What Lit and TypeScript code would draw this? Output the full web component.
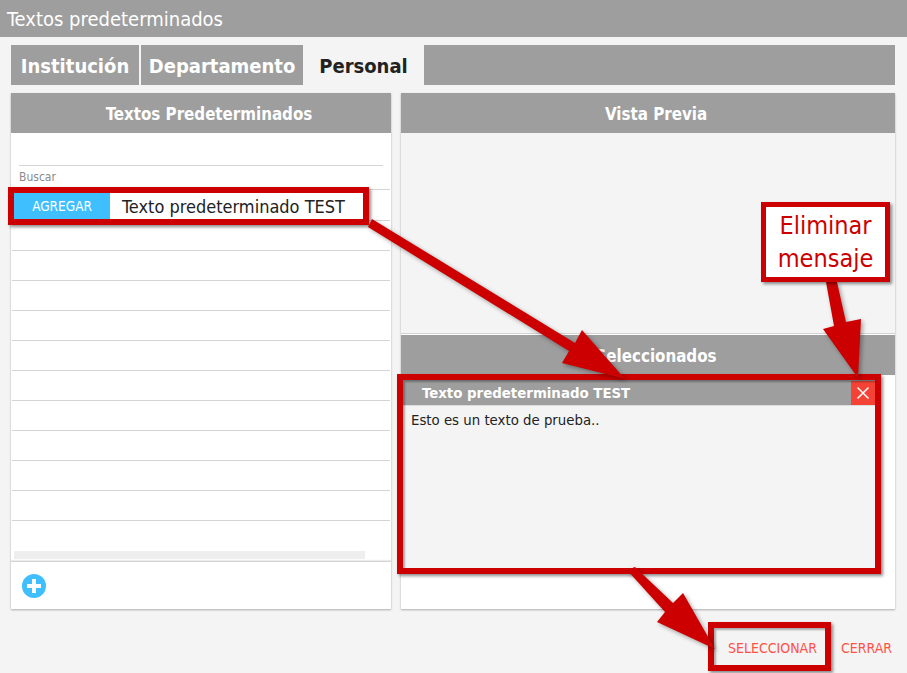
import { LitElement, html, css, svg } from "lit";
import { customElement } from "lit/decorators.js";

const emptyRows = Array.from({ length: 10 });

@customElement("app-root")
export class AppRoot extends LitElement {
  static styles = css`
    :host {
      display: flex;
      flex-direction: column;
      position: relative;
      width: 907px;
      height: 673px;
      overflow: hidden;
      background: #f4f4f4;
      font-family: "DejaVu Sans", sans-serif;
      font-stretch: condensed;
      color: #222;
    }
    .title {
      height: 37px;
      flex: none;
      background: #9e9e9e;
      color: #fff;
      font-size: 20px;
      line-height: 38px;
      padding-left: 7px;
    }
    .tabs {
      display: flex;
      height: 40px;
      flex: none;
      margin: 8px 12px 0 11px;
      gap: 2px;
    }
    .tab {
      background: #9e9e9e;
      color: #fff;
      font-weight: 700;
      font-size: 20px;
      line-height: 42px;
      text-align: center;
    }
    .t1 { width: 128px; }
    .t2 { width: 162px; }
    .t3 { width: 121px; margin-left: -2px; background: transparent; color: #222; }
    .t4 { flex: 1; margin-left: -2px; }
    .columns {
      display: flex;
      gap: 10px;
      margin: 8px 12px 0 11px;
      height: 516px;
      flex: none;
    }
    .panel {
      background: #fff;
      box-shadow: 0 1px 2px rgba(0, 0, 0, 0.3);
      display: flex;
      flex-direction: column;
    }
    .left { width: 380px; }
    .right { flex: 1; }
    .phead {
      height: 40px;
      flex: none;
      box-sizing: border-box;
      background: #9e9e9e;
      color: #fff;
      font-weight: 700;
      font-size: 16.8px;
      line-height: 42px;
      text-align: center;
      padding-left: 16px;
    }
    .search {
      height: 56px;
      flex: none;
      margin: 0 8px;
      box-sizing: border-box;
      padding-top: 32px;
    }
    .search div {
      border-top: 1px solid #d4d4d4;
      color: #8a8a8a;
      font-size: 12px;
      line-height: 23px;
    }
    .list { flex: none; border-top: 1px solid #d4d4d4; margin: 0 1px; }
    .row {
      height: 29px;
      border-bottom: 1px solid #d4d4d4;
    }
    .row.first {
      display: flex;
      padding-top: 3px;
      height: 27px;
    }
    .add {
      width: 96px;
      height: 26px;
      margin-left: 2px;
      background: #40bfff;
      color: #fff;
      font-size: 13.5px;
      line-height: 26px;
      text-align: center;
    }
    .rowtext {
      margin-left: 12px;
      font-size: 18px;
      line-height: 28px;
      color: #222;
    }
    .scroll {
      height: 8px;
      width: 351px;
      margin: 30px 0 0 3px;
      background: #eeeeee;
      flex: none;
    }
    .pfoot {
      flex: 1;
      margin-top: 2px;
      border-top: 1px solid #d4d4d4;
      box-shadow: 0 -1px 1px rgba(0, 0, 0, 0.08);
      display: flex;
      align-items: center;
      padding-left: 11px;
    }
    .pfoot svg { display: block; }
    .preview {
      height: 200px;
      flex: none;
      background: #f4f4f4;
      border-bottom: 1px solid #d4d4d4;
      margin-bottom: 1px;
    }
    .sel { flex: 1; padding: 5px 20px 0 2px; }
    .item { background: #f4f4f4; height: 188px; }
    .ihead {
      height: 25px;
      background: #9e9e9e;
      color: #fff;
      font-weight: 700;
      font-size: 14.85px;
      line-height: 27px;
      padding-left: 19px;
      display: flex;
      justify-content: space-between;
      border-bottom: 1px solid #dcdcdc;
    }
    .close {
      width: 24px;
      height: 24px;
      background: #f44336;
      display: flex;
      align-items: center;
      justify-content: center;
      margin-top: 1px;
    }
    .ibody {
      padding: 5px 8px;
      font-size: 14.8px;
      line-height: 18px;
      color: #222;
    }
    .actions {
      display: flex;
      justify-content: flex-end;
      gap: 24px;
      padding: 30px 15px 0 0;
      color: #ff5246;
      font-size: 14px;
      line-height: 18px;
    }
    .mark {
      position: absolute;
      box-sizing: border-box;
      border: 6px solid #cc0000;
      box-shadow: 2px 2px 3px rgba(0, 0, 0, 0.45), inset 2px 2px 2px rgba(0, 0, 0, 0.3);
      pointer-events: none;
    }
    .m1 { left: 8px; top: 187px; width: 361px; height: 38px; box-shadow: 2px 2px 3px rgba(0,0,0,.45); }
    .m2 { left: 397px; top: 374px; width: 484px; height: 200px; }
    .m3 { left: 708px; top: 622px; width: 123px; height: 49px; }
    .callout {
      position: absolute;
      left: 761px;
      top: 202px;
      width: 129px;
      height: 80px;
      box-sizing: border-box;
      border: 5px solid #cc0000;
      background: #fff;
      color: #cc0000;
      font-size: 25px;
      line-height: 33px;
      text-align: center;
      padding-top: 2px;
      box-shadow: 2px 2px 3px rgba(0, 0, 0, 0.45);
    }
    .arrows {
      position: absolute;
      left: 0;
      top: 0;
      pointer-events: none;
      filter: drop-shadow(2px 2px 2px rgba(0, 0, 0, 0.35));
    }
  `;

  render() {
    return html`
      <div class="title">Textos predeterminados</div>
      <div class="tabs">
        <div class="tab t1">Institución</div>
        <div class="tab t2">Departamento</div>
        <div class="tab t3">Personal</div>
        <div class="tab t4"></div>
      </div>
      <div class="columns">
        <div class="panel left">
          <div class="phead">Textos Predeterminados</div>
          <div class="search"><div>Buscar</div></div>
          <div class="list">
            <div class="row first">
              <div class="add">AGREGAR</div>
              <div class="rowtext">Texto predeterminado TEST</div>
            </div>
            ${emptyRows.map(() => html`<div class="row"></div>`)}
          </div>
          <div class="scroll"></div>
          <div class="pfoot">
            <svg width="24" height="24" viewBox="0 0 24 24">
              <circle cx="12" cy="12" r="12" fill="#40bfff"></circle>
              <path d="M10 5h4v5h5v4h-5v5h-4v-5H5v-4h5z" fill="#fff"></path>
            </svg>
          </div>
        </div>
        <div class="panel right">
          <div class="phead">Vista Previa</div>
          <div class="preview"></div>
          <div class="phead">Seleccionados</div>
          <div class="sel">
            <div class="item">
              <div class="ihead">
                <span>Texto predeterminado TEST</span>
                <div class="close">
                  <svg width="14" height="14" viewBox="0 0 14 14">
                    <path d="M1.5 1.5l11 11M12.5 1.5l-11 11" stroke="#fff" stroke-width="1.5" fill="none"></path>
                  </svg>
                </div>
              </div>
              <div class="ibody">Esto es un texto de prueba..</div>
            </div>
          </div>
        </div>
      </div>
      <div class="actions">
        <span>SELECCIONAR</span>
        <span>CERRAR</span>
      </div>

      <div class="mark m1"></div>
      <div class="mark m2"></div>
      <div class="mark m3"></div>
      <svg class="arrows" width="907" height="673" viewBox="0 0 907 673">
        ${svg`
          <polygon fill="#cc0000" points="372,219 575,343 582,330 625,379 562,363 569,351 368,227"></polygon>
          <polygon fill="#cc0000" points="826,282 837,282 846,322 861,319 858,378 823,329 834,326"></polygon>
          <polygon fill="#cc0000" points="635,567 673,603 683,593 715,649 657,622 665,612 627,570"></polygon>
        `}
      </svg>
      <div class="callout">Eliminar<br />mensaje</div>
    `;
  }
}
